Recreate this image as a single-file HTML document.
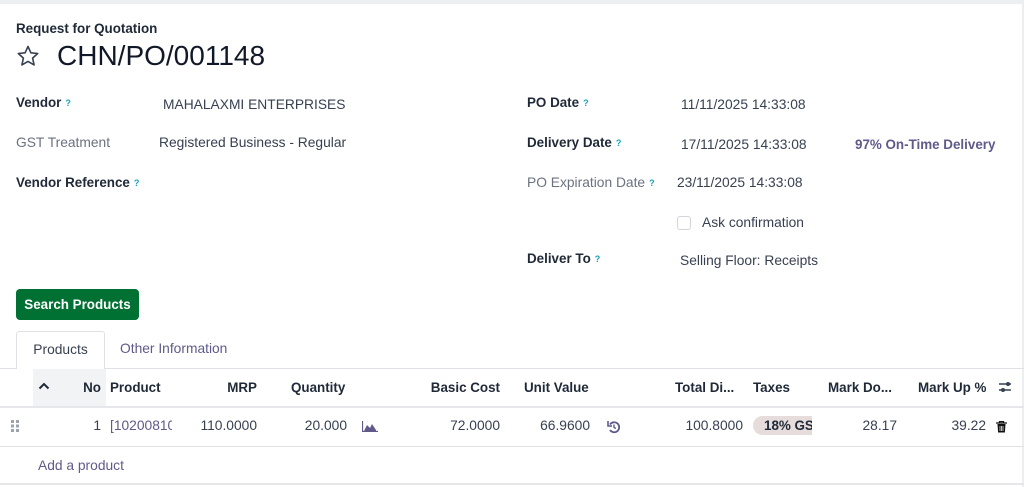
<!DOCTYPE html>
<html><head><meta charset="utf-8"><style>
*{margin:0;padding:0;box-sizing:border-box}
body{width:1024px;height:487px;background:#fff;font-family:"Liberation Sans",sans-serif;font-size:13.8px;color:#374151;position:relative;overflow:hidden}
.a{position:absolute;white-space:nowrap;line-height:16px}
.b{font-weight:bold;color:#1f2937;font-size:13.4px}
.g{color:#6b7280}
.q{color:#17a2b8;font-size:9px;vertical-align:top;margin-left:4px;font-weight:bold}
.h{font-weight:bold;color:#1f2937;top:380px;font-size:13.4px}
.r{text-align:right}
.c{top:418px;color:#374151}
.line{position:absolute;left:0;width:1024px;height:1px;background:#dee2e6}
</style></head><body>
<div style="position:absolute;left:0;top:0;width:1024px;height:4px;background:#eceef0"></div>
<div style="position:absolute;right:0;top:0;width:2px;height:487px;background:#eceef0"></div>
<div class="a b" style="left:16px;top:21px;font-size:13.4px">Request for Quotation</div>
<svg class="a" style="left:15px;top:44px" width="26" height="24" viewBox="0 0 24 24"><path d="M12 2.5l2.9 6.3 6.8.7-5.1 4.6 1.5 6.8L12 17.4l-6.1 3.5 1.5-6.8L2.3 9.5l6.8-.7z" fill="none" stroke="#374151" stroke-width="1.6" stroke-linejoin="round"/></svg>
<div class="a" style="left:57px;top:39px;font-size:28px;line-height:34px;color:#111827">CHN/PO/001148</div>

<div class="a b" style="left:16px;top:95px">Vendor<span class="q">?</span></div>
<div class="a" style="left:163px;top:97px">MAHALAXMI ENTERPRISES</div>
<div class="a g" style="left:16px;top:135px">GST Treatment</div>
<div class="a" style="left:159px;top:135px">Registered Business - Regular</div>
<div class="a b" style="left:16px;top:175px">Vendor Reference<span class="q">?</span></div>

<div class="a b" style="left:527px;top:95px">PO Date<span class="q">?</span></div>
<div class="a" style="left:681px;top:97px">11/11/2025 14:33:08</div>
<div class="a b" style="left:527px;top:135px">Delivery Date<span class="q">?</span></div>
<div class="a" style="left:681px;top:137px">17/11/2025 14:33:08</div>
<div class="a b" style="left:855px;top:137px;color:#5f5a8a">97% On-Time Delivery</div>
<div class="a g" style="left:527px;top:175px">PO Expiration Date<span class="q">?</span></div>
<div class="a" style="left:677px;top:175px">23/11/2025 14:33:08</div>
<div class="a" style="left:677px;top:216px;width:14px;height:14px;border:1px solid #d1d5db;border-radius:3px"></div>
<div class="a" style="left:702px;top:215px">Ask confirmation</div>
<div class="a b" style="left:527px;top:251px">Deliver To<span class="q">?</span></div>
<div class="a" style="left:680px;top:253px">Selling Floor: Receipts</div>

<div class="a" style="left:16px;top:289px;width:123px;height:31px;background:#017133;border-radius:4px;color:#fff;font-weight:bold;text-align:center;line-height:31px;font-size:13.4px">Search Products</div>

<div class="a" style="left:16px;top:331px;width:89px;height:38px;border:1px solid #dee2e6;border-bottom:none;background:#fff;border-radius:3px 3px 0 0;color:#374151;text-align:center;line-height:36px">Products</div>
<div class="a" style="left:120px;top:341px;color:#5f5a8a">Other Information</div>
<div class="line" style="top:368px;left:0;width:16px"></div>
<div class="line" style="top:368px;left:105px;width:919px"></div>
<div style="position:absolute;left:33px;top:369px;width:73px;height:37px;background:#f2f3f4"></div>
<svg class="a" style="left:38px;top:382px" width="12" height="8"><path d="M1.5 6.5L6 2l4.5 4.5" stroke="#1f2937" stroke-width="2" fill="none"/></svg>
<div class="a h r" style="left:70px;width:31px">No</div>
<div class="a h" style="left:110px">Product</div>
<div class="a h r" style="left:200px;width:57px">MRP</div>
<div class="a h" style="left:291px">Quantity</div>
<div class="a h r" style="left:420px;width:80px">Basic Cost</div>
<div class="a h" style="left:524px">Unit Value</div>
<div class="a h" style="left:675px">Total Di...</div>
<div class="a h" style="left:753px">Taxes</div>
<div class="a h" style="left:828px">Mark Do...</div>
<div class="a h" style="left:918px">Mark Up %</div>
<svg class="a" style="left:998px;top:380px" width="16" height="14" viewBox="0 0 16 14"><path d="M1 4h12M1 10h12" stroke="#374151" stroke-width="1.6"/><circle cx="10" cy="4" r="2" fill="#374151"/><circle cx="5" cy="10" r="2" fill="#374151"/></svg>
<div class="line" style="top:406px;height:2px;background:#e5e7eb"></div>
<svg class="a" style="left:11px;top:420px" width="10" height="12"><g fill="#9ca3af"><rect x="0" y="0" width="3" height="3"/><rect x="5" y="0" width="3" height="3"/><rect x="0" y="4.5" width="3" height="3"/><rect x="5" y="4.5" width="3" height="3"/><rect x="0" y="9" width="3" height="3"/><rect x="5" y="9" width="3" height="3"/></g></svg>
<div class="a c r" style="left:70px;width:31px">1</div>
<div class="a c" style="left:110px;width:62px;overflow:hidden;color:#5f5a8a">[10200810</div>
<div class="a c r" style="left:190px;width:67px">110.0000</div>
<div class="a c r" style="left:290px;width:57px">20.000</div>
<svg class="a" style="left:362px;top:421px" width="16" height="11"><path d="M0.5 0v10.5H16" stroke="#5f5a8a" stroke-width="1.2" fill="none"/><path d="M2 10L5 4 8 7 10 3 14 9V10z" fill="#5f5a8a"/></svg>
<div class="a c r" style="left:520px;width:70px">66.9600</div>
<div class="a c r" style="left:420px;width:80px">72.0000</div>
<svg class="a" style="left:607px;top:420px" width="14" height="14" viewBox="0 0 14 14"><path d="M3 4.5A5 5 0 1 1 3 10" stroke="#5f5a8a" stroke-width="1.8" fill="none"/><path d="M1 1v5h4" stroke="#5f5a8a" stroke-width="1.6" fill="none"/><path d="M7 4.5v3l2 1" stroke="#5f5a8a" stroke-width="1.4" fill="none"/></svg>
<div class="a c r" style="left:660px;width:83px">100.8000</div>
<div class="a" style="left:753px;top:416px;width:59px;height:19px;background:#e6dcdc;border-radius:10px 0 0 10px;overflow:hidden;padding-left:11px;line-height:19px;font-weight:bold;color:#1f2937;font-size:13.4px">18% GST</div>
<div class="a c r" style="left:840px;width:57px">28.17</div>
<div class="a c r" style="left:930px;width:56px">39.22</div>
<svg class="a" style="left:996px;top:421px" width="11" height="12" viewBox="0 0 11 12"><path d="M0 2h11M3.5 2V0.5h4V2" stroke="#111" stroke-width="1.3" fill="none"/><path d="M1.5 3h8l-.6 8.5H2.1z" fill="#111"/><path d="M4 5v5M5.5 5v5M7 5v5" stroke="#fff" stroke-width=".7"/></svg>
<div class="line" style="top:446px"></div>
<div class="a" style="left:38px;top:458px;color:#5f5a8a">Add a product</div>
<div class="line" style="top:483px;height:2px;background:#e5e7eb"></div>
</body></html>
